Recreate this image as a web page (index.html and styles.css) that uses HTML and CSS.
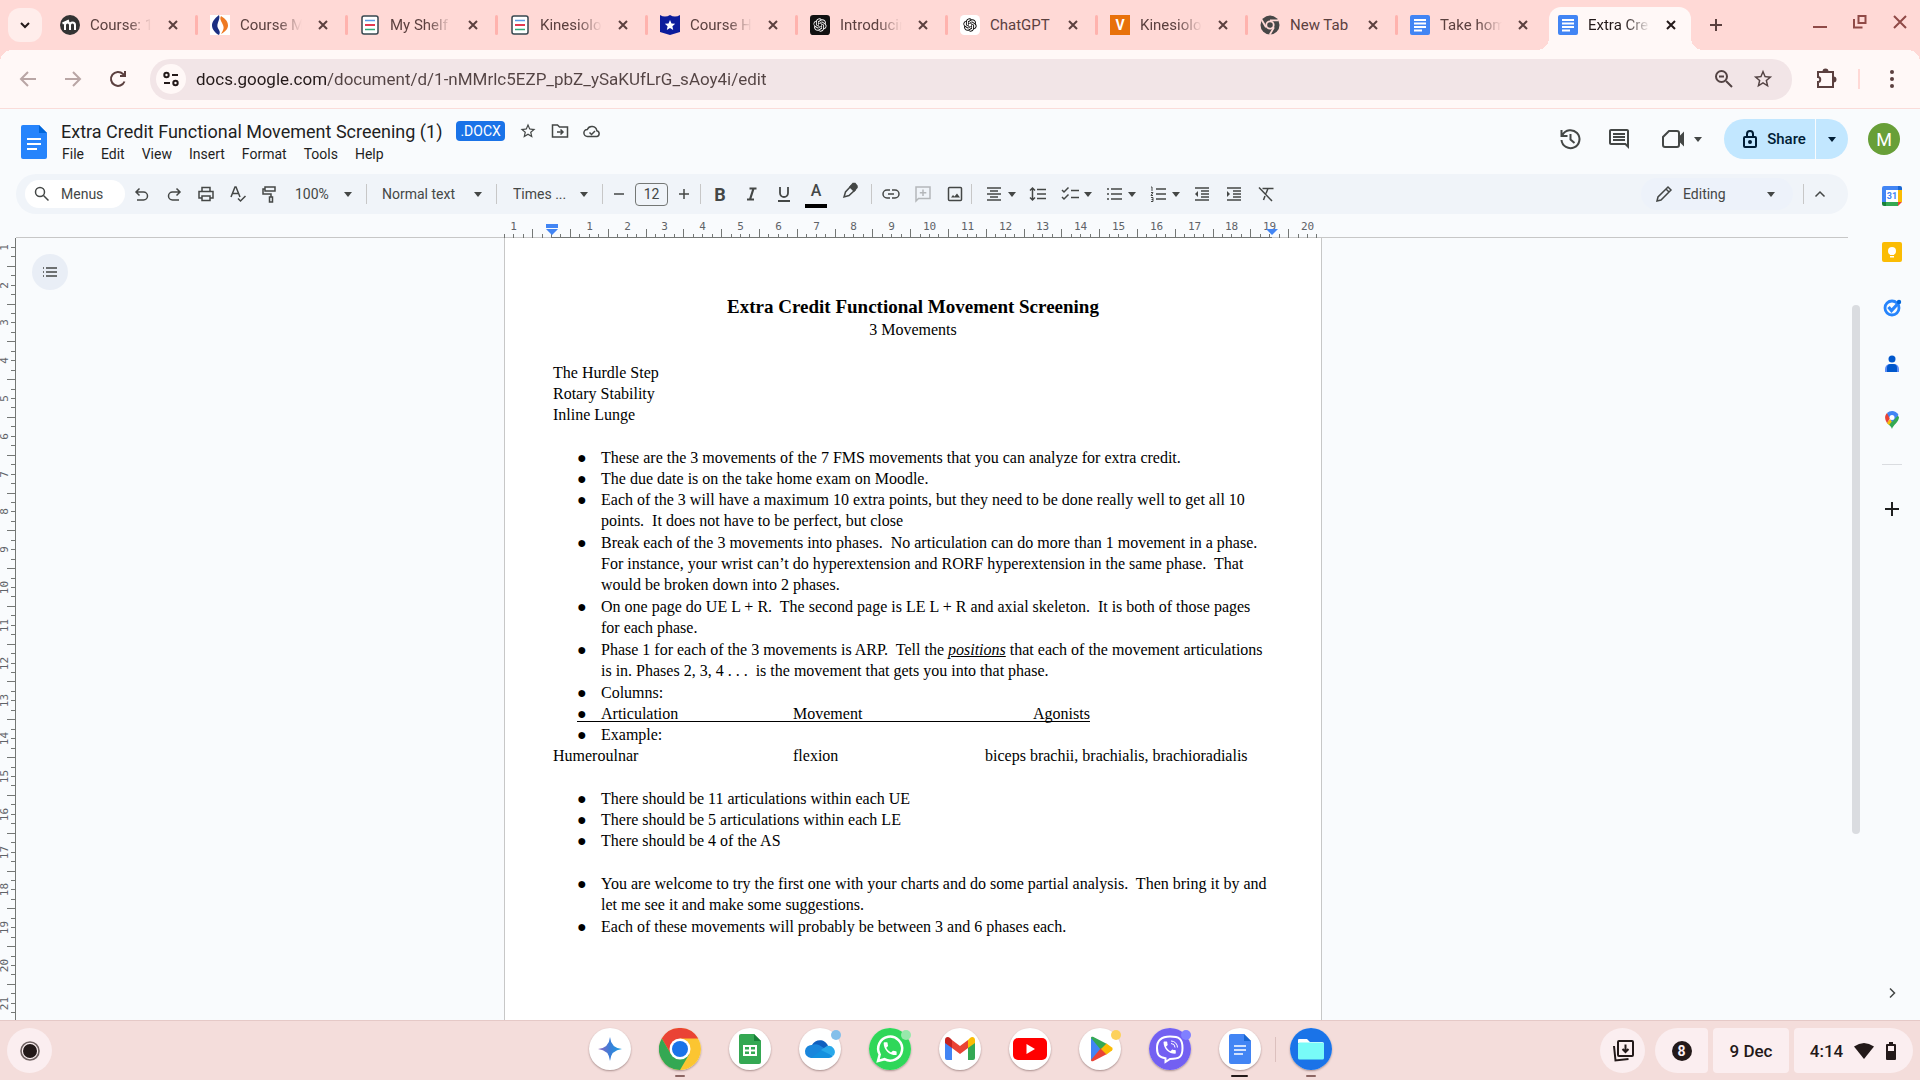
FILE: index.html
```
<!DOCTYPE html>
<html lang="en">
<head>
    <meta charset="UTF-8">
    <meta name="viewport" content="width=device-width, initial-scale=1.0">
    <title>Extra Credit Functional Movement Screening (1)</title>
    <link rel="stylesheet" href="styles.css">
</head>
<body>
    <!-- Tab strip -->
    <div class="tab-strip">
        <button class="tab-search" aria-label="Search tabs">
            <svg width="16" height="16" viewBox="0 0 16 16" class="line bold"><path d="M4 6l4 4 4-4"/></svg>
        </button>
        <div class="tab">
            <svg class="favicon" viewBox="0 0 20 20"><circle cx="10" cy="10" r="10" fill="#333"/><path d="M5 15V10a2.500 2.500 0 0 1 5 0v5M10 10a2.500 2.500 0 0 1 5 0v5M2.500 8.500L9 5.500" fill="none" stroke="#fff" stroke-width="2"/></svg>
            <span class="tab-title fade">Course: 1</span>
            <button class="tab-close" aria-label="Close tab"><svg width="12" height="12" viewBox="0 0 12 12" class="line bold"><path d="M2 2l8 8M10 2l-8 8"/></svg></button>
        </div>
        <div class="tab">
            <svg class="favicon" viewBox="0 0 20 20"><path fill="#fff" d="M0 0h20v20H0z"/><path fill="#1b2f82" d="M9 0C4 4 2 7 2 10.500S5 18 9 20c1-2 1-3 0-5-2-3-2-4.500-1-7.500S10 3 9 0z"/><path fill="#ee7a23" d="M11 1c5 3 7 6 7 9.500S15 17 11 19c3-5 3-6 2-9S9 4 11 1z"/></svg>
            <span class="tab-title fade">Course Ma</span>
            <button class="tab-close" aria-label="Close tab"><svg width="12" height="12" viewBox="0 0 12 12" class="line bold"><path d="M2 2l8 8M10 2l-8 8"/></svg></button>
        </div>
        <div class="tab">
            <svg class="favicon" viewBox="0 0 20 20"><rect x="2" y="1" width="16" height="18" rx="2" fill="#fff" stroke="#37474f" stroke-width="1.500"/><path d="M5 5.500h10" stroke="#5b9be6" stroke-width="1.500"/><path d="M5 10h10" stroke="#e53950" stroke-width="2"/><path d="M5 14.500h10" stroke="#34a877" stroke-width="1.500"/></svg>
            <span class="tab-title fade">My Shelf</span>
            <button class="tab-close" aria-label="Close tab"><svg width="12" height="12" viewBox="0 0 12 12" class="line bold"><path d="M2 2l8 8M10 2l-8 8"/></svg></button>
        </div>
        <div class="tab">
            <svg class="favicon" viewBox="0 0 20 20"><rect x="2" y="1" width="16" height="18" rx="2" fill="#fff" stroke="#37474f" stroke-width="1.500"/><path d="M5 5.500h10" stroke="#5b9be6" stroke-width="1.500"/><path d="M5 10h10" stroke="#e53950" stroke-width="2"/><path d="M5 14.500h10" stroke="#34a877" stroke-width="1.500"/></svg>
            <span class="tab-title fade">Kinesiolo</span>
            <button class="tab-close" aria-label="Close tab"><svg width="12" height="12" viewBox="0 0 12 12" class="line bold"><path d="M2 2l8 8M10 2l-8 8"/></svg></button>
        </div>
        <div class="tab">
            <svg class="favicon" viewBox="0 0 20 20"><path fill="#0c1c9c" d="M0 0q5 3 10 0 5 3 10 0v17l-10 3-10-3z"/><path fill="#fff" d="M10 5l1.500 3.400 3.700.4-2.800 2.500.8 3.700-3.200-1.900L6.800 15l.8-3.700-2.800-2.500 3.700-.4z"/></svg>
            <span class="tab-title fade">Course H</span>
            <button class="tab-close" aria-label="Close tab"><svg width="12" height="12" viewBox="0 0 12 12" class="line bold"><path d="M2 2l8 8M10 2l-8 8"/></svg></button>
        </div>
        <div class="tab">
            <svg class="favicon" viewBox="-6 -6 36 36"><rect x="-6" y="-6" width="36" height="36" rx="6" fill="#111"/><path id="knot" fill="#fff" d="M22.2819 9.8211a5.9847 5.9847 0 0 0-.5157-4.9108 6.0462 6.0462 0 0 0-6.5098-2.9A6.0651 6.0651 0 0 0 4.9807 4.1818a5.9847 5.9847 0 0 0-3.9977 2.9 6.0462 6.0462 0 0 0 .7427 7.0966 5.98 5.98 0 0 0 .511 4.9107 6.051 6.051 0 0 0 6.5146 2.9001A5.9847 5.9847 0 0 0 13.2599 24a6.0557 6.0557 0 0 0 5.7718-4.2058 5.9894 5.9894 0 0 0 3.9977-2.9001 6.0557 6.0557 0 0 0-.7475-7.0729zm-9.022 12.6081a4.4755 4.4755 0 0 1-2.8764-1.0408l.1419-.0804 4.7783-2.7582a.7948.7948 0 0 0 .3927-.6813v-6.7369l2.02 1.1686a.071.071 0 0 1 .038.052v5.5826a4.504 4.504 0 0 1-4.4945 4.4944zm-9.6607-4.1254a4.4708 4.4708 0 0 1-.5346-3.0137l.142.0852 4.783 2.7582a.7712.7712 0 0 0 .7806 0l5.8428-3.3685v2.3324a.0804.0804 0 0 1-.0332.0615L9.74 19.9502a4.4992 4.4992 0 0 1-6.1408-1.6464zM2.3408 7.8956a4.485 4.485 0 0 1 2.3655-1.9728V11.6a.7664.7664 0 0 0 .3879.6765l5.8144 3.3543-2.0201 1.1685a.0757.0757 0 0 1-.071 0l-4.8303-2.7865A4.504 4.504 0 0 1 2.3408 7.872zm16.5963 3.8558L13.1038 8.364 15.1192 7.2a.0757.0757 0 0 1 .071 0l4.8303 2.7913a4.4944 4.4944 0 0 1-.6765 8.1042v-5.6772a.79.79 0 0 0-.407-.667zm2.0107-3.0231l-.142-.0852-4.7735-2.7818a.7759.7759 0 0 0-.7854 0L9.409 9.2297V6.8974a.0662.0662 0 0 1 .0284-.0615l4.8303-2.7866a4.4992 4.4992 0 0 1 6.6802 4.66zM8.3065 12.863l-2.02-1.1638a.0804.0804 0 0 1-.038-.0567V6.0742a4.4992 4.4992 0 0 1 7.3757-3.4537l-.142.0805L8.704 5.459a.7948.7948 0 0 0-.3927.6813zm1.0976-2.3654l2.602-1.4998 2.6069 1.4998v2.9994l-2.5974 1.4997-2.6067-1.4997Z"/></svg>
            <span class="tab-title fade">Introducin</span>
            <button class="tab-close" aria-label="Close tab"><svg width="12" height="12" viewBox="0 0 12 12" class="line bold"><path d="M2 2l8 8M10 2l-8 8"/></svg></button>
        </div>
        <div class="tab">
            <svg class="favicon knot-dark" viewBox="-6 -6 36 36"><rect x="-6" y="-6" width="36" height="36" rx="8" fill="#fff"/><use href="#knot"/></svg>
            <span class="tab-title">ChatGPT</span>
            <button class="tab-close" aria-label="Close tab"><svg width="12" height="12" viewBox="0 0 12 12" class="line bold"><path d="M2 2l8 8M10 2l-8 8"/></svg></button>
        </div>
        <div class="tab">
            <svg class="favicon" viewBox="0 0 20 20"><path fill="#e8710a" d="M0 0h20v20H0z"/><text x="10" y="15" class="fav-letter" fill="#fff">V</text></svg>
            <span class="tab-title fade">Kinesiolo</span>
            <button class="tab-close" aria-label="Close tab"><svg width="12" height="12" viewBox="0 0 12 12" class="line bold"><path d="M2 2l8 8M10 2l-8 8"/></svg></button>
        </div>
        <div class="tab">
            <svg class="favicon" viewBox="0 0 20 20"><circle cx="10" cy="10" r="9.500" fill="#474747"/><circle cx="10" cy="10" r="3.700" fill="#474747" stroke="#ffd9d6" stroke-width="1.800"/><path d="M10 5.400h8.500M6 12.300L1.800 5M14 12.300l-4.300 7.500" stroke="#ffd9d6" stroke-width="1.800"/></svg>
            <span class="tab-title">New Tab</span>
            <button class="tab-close" aria-label="Close tab"><svg width="12" height="12" viewBox="0 0 12 12" class="line bold"><path d="M2 2l8 8M10 2l-8 8"/></svg></button>
        </div>
        <div class="tab last-idle">
            <svg class="favicon" viewBox="0 0 20 20"><rect width="20" height="20" rx="2" fill="#4285f4"/><path d="M4 5h12M4 8.500h12M4 12h12M4 15.500h8" stroke="#fff" stroke-width="1.800"/></svg>
            <span class="tab-title fade">Take hom</span>
            <button class="tab-close" aria-label="Close tab"><svg width="12" height="12" viewBox="0 0 12 12" class="line bold"><path d="M2 2l8 8M10 2l-8 8"/></svg></button>
        </div>
        <div class="tab active">
            <svg class="favicon" viewBox="0 0 20 20"><rect width="20" height="20" rx="2" fill="#4285f4"/><path d="M4 5h12M4 8.500h12M4 12h12M4 15.500h8" stroke="#fff" stroke-width="1.800"/></svg>
            <span class="tab-title fade">Extra Cre</span>
            <button class="tab-close" aria-label="Close tab"><svg width="12" height="12" viewBox="0 0 12 12" class="line bold"><path d="M2 2l8 8M10 2l-8 8"/></svg></button>
        </div>
        <button class="new-tab" aria-label="New tab"><svg width="16" height="16" viewBox="0 0 16 16" class="line bold"><path d="M8 2v12M2 8h12"/></svg></button>
        <div class="window-controls">
            <button aria-label="Minimise"><svg width="16" height="16" viewBox="0 0 16 16" class="line"><path d="M1 13h14" stroke-width="2"/></svg></button>
            <button aria-label="Restore"><svg width="16" height="16" viewBox="0 0 16 16" class="line bold"><path d="M6.500 2h7v7h-7zM2 5v8.500h8.500"/></svg></button>
            <button aria-label="Close window"><svg width="16" height="16" viewBox="0 0 16 16" class="line bold"><path d="M2 2l12 12M14 2L2 14"/></svg></button>
        </div>
    </div>

    <!-- Address bar -->
    <div class="address-bar">
        <button class="nav-btn off" aria-label="Back"><svg width="20" height="20" viewBox="0 0 20 20" class="line bold"><path d="M18 10H3M10 3l-7 7 7 7"/></svg></button>
        <button class="nav-btn off" aria-label="Forward"><svg width="20" height="20" viewBox="0 0 20 20" class="line bold"><path d="M2 10h15M10 3l7 7-7 7"/></svg></button>
        <button class="nav-btn" aria-label="Reload"><svg width="20" height="20" viewBox="0 0 20 20" class="line bold"><path d="M16.500 12.500A7 7 0 1 1 15 5l2 2M17 2v5h-5"/></svg></button>
        <div class="omnibox">
            <button class="site-info" aria-label="Site information"><svg width="18" height="18" viewBox="0 0 18 18" class="line bold"><circle cx="4.500" cy="5" r="2.200"/><path d="M10 5h6M2 13h6"/><circle cx="13.500" cy="13" r="2.200"/></svg></button>
            <input class="url" type="text" aria-label="Address" value="docs.google.com/document/d/1-nMMrlc5EZP_pbZ_ySaKUfLrG_sAoy4i/edit">
            <button aria-label="Zoom"><svg width="20" height="20" viewBox="0 0 20 20" class="line bold"><circle cx="7.500" cy="7.500" r="5.500"/><path d="M5 7.500h5M12 12l6 6"/></svg></button>
            <button aria-label="Bookmark"><svg width="22" height="22" viewBox="0 0 24 24"><path fill="currentColor" d="M22 9.240l-7.190-.62L12 2 9.190 8.630 2 9.240l5.460 4.730L5.820 21 12 17.270 18.180 21l-1.630-7.030L22 9.240zM12 15.400l-3.760 2.270 1-4.280-3.320-2.880 4.380-.38L12 6.100l1.710 4.040 4.380.38-3.320 2.880 1 4.280L12 15.400z"/></svg></button>
        </div>
        <button class="nav-btn ext" aria-label="Extensions"><svg width="24" height="24" viewBox="0 0 24 24" class="line bold"><path d="M4 5h15v15H4v-5c3 0 3-5 0-5z"/><path d="M9.500 4.500a2 2 0 0 1 4 0M19.500 10.500a2 2 0 0 1 0 4" fill="currentColor"/></svg></button>
        <span class="bar-split"></span>
        <button class="nav-btn more" aria-label="Menu"><svg width="20" height="20" viewBox="0 0 20 20"><g fill="currentColor"><circle cx="10" cy="3" r="2"/><circle cx="10" cy="10" r="2"/><circle cx="10" cy="17" r="2"/></g></svg></button>
    </div>

    <!-- Docs header -->
    <header class="docs-header">
        <a class="docs-logo" href="#" aria-label="Docs home"><svg width="26" height="34" viewBox="0 0 26 34"><path fill="#2684fc" d="M2 0h16l8 8v24a2 2 0 0 1-2 2H2a2 2 0 0 1-2-2V2a2 2 0 0 1 2-2z"/><path fill="#0066da" d="M18 0l8 8h-8z"/><path d="M6 14h14M6 19h14M6 24h10" stroke="#fff" stroke-width="2"/></svg></a>
        <div class="doc-meta">
            <div class="title-row">
                <span class="doc-title">Extra Credit Functional Movement Screening (1)</span>
                <span class="badge">.DOCX</span>
                <button aria-label="Star"><svg width="18" height="18" viewBox="0 0 24 24"><path fill="currentColor" d="M22 9.240l-7.190-.62L12 2 9.190 8.630 2 9.240l5.460 4.730L5.820 21 12 17.270 18.180 21l-1.630-7.030L22 9.240zM12 15.400l-3.760 2.270 1-4.280-3.320-2.880 4.380-.38L12 6.100l1.710 4.040 4.380.38-3.320 2.880 1 4.280L12 15.400z"/></svg></button>
                <button aria-label="Move"><svg width="18" height="18" viewBox="0 0 18 18" class="line"><path d="M1.500 3h5l2 2h8v10h-15zM6 10h6M9.500 7.500L12 10l-2.500 2.500"/></svg></button>
                <button aria-label="Saved to Drive"><svg width="18" height="18" viewBox="0 0 18 18" class="line"><path d="M4.500 14.500a3.500 3.500 0 0 1-.2-7 5 5 0 0 1 9.500 1.200A3 3 0 0 1 14 14.500zM6.500 10.500l2 2 3.500-3.500"/></svg></button>
            </div>
            <nav class="menu-row">
                <button>File</button>
                <button>Edit</button>
                <button>View</button>
                <button>Insert</button>
                <button>Format</button>
                <button>Tools</button>
                <button>Help</button>
            </nav>
        </div>
        <div class="header-actions">
            <button class="round-btn" aria-label="Version history"><svg width="24" height="24" viewBox="0 0 24 24" class="line bold"><path d="M4.500 8A9 9 0 1 1 3.500 13M3.500 3v6h6M12.500 7v5.500l4 3.500"/></svg></button>
            <button class="round-btn" aria-label="Comments"><svg width="24" height="24" viewBox="0 0 24 24"><path fill="currentColor" d="M22 4c0-1.100-.9-2-2-2H4c-1.100 0-2 .9-2 2v12c0 1.100.9 2 2 2h14l4 4zM4 16V4h16v13.200L18.800 16zM6 12h12v2H6zm0-3h12v2H6zm0-3h12v2H6z"/></svg></button>
            <button class="meet-btn" aria-label="Meet"><svg width="26" height="24" viewBox="0 0 26 24" class="line bold"><path d="M8 4h8a2 2 0 0 1 2 2v12a2 2 0 0 1-2 2H4a2 2 0 0 1-2-2v-8z"/><path d="M18 11l4-4v10l-4-4z" fill="currentColor"/></svg><i class="caret"></i></button>
            <div class="share">
                <button class="share-main"><svg width="16" height="20" viewBox="0 0 16 20" class="line bold"><rect x="2" y="8" width="12" height="10" rx="1"/><path d="M5 8V5a3 3 0 0 1 6 0v3"/><circle cx="8" cy="13" r="1" fill="currentColor"/></svg>Share</button>
                <button class="share-more" aria-label="Share options"><i class="caret"></i></button>
            </div>
            <button class="avatar">M</button>
        </div>
    </header>

    <div class="docs-body">
        <div class="main-col">
            <!-- Toolbar -->
            <div class="toolbar">
                <button class="menus-pill"><svg width="18" height="18" viewBox="0 0 18 18" class="line"><circle cx="7" cy="7" r="4.500"/><path d="M10.500 10.500l5 5"/></svg>Menus</button>
                <button class="tool" aria-label="Undo"><svg width="18" height="18" viewBox="0 0 18 18" class="line"><path d="M4 15h6.500a4 4 0 0 0 0-8H3.500M6.500 3.500L3 7l3.500 3.500"/></svg></button>
                <button class="tool" aria-label="Redo"><svg width="18" height="18" viewBox="0 0 18 18" class="line"><path d="M14 15H7.500a4 4 0 0 1 0-8h7M11.500 3.500L15 7l-3.500 3.500"/></svg></button>
                <button class="tool" aria-label="Print"><svg width="18" height="18" viewBox="0 0 18 18" class="line"><path d="M5 6V2.500h8V6M5 13H2V6.500h14V13h-3M5 11h8v4.500H5z"/></svg></button>
                <button class="tool" aria-label="Spelling"><svg width="18" height="18" viewBox="0 0 18 18" class="line"><path d="M2 12L6 2h1l4 10M3.500 8.500h6M9 13.500l2.500 2.500 5-5"/></svg></button>
                <button class="tool" aria-label="Paint format"><svg width="18" height="18" viewBox="0 0 18 18" class="line"><path d="M4 2h10v4H4zM4 4H2v5h8v3M8.500 12h3v5h-3z"/></svg></button>
                <label class="pick zoom"><select aria-label="Zoom"><option>100%</option></select></label>
                <span class="sep"></span>
                <label class="pick style"><select aria-label="Styles"><option>Normal text</option></select></label>
                <span class="sep"></span>
                <label class="pick font"><select aria-label="Font"><option>Times ...</option></select></label>
                <span class="sep"></span>
                <button class="tool" aria-label="Decrease font size"><svg width="12" height="12" viewBox="0 0 12 12" class="line"><path d="M1 6h10"/></svg></button>
                <input class="size-box" type="text" aria-label="Font size" value="12">
                <button class="tool" aria-label="Increase font size"><svg width="12" height="12" viewBox="0 0 12 12" class="line"><path d="M1 6h10M6 1v10"/></svg></button>
                <span class="sep gap"></span>
                <button class="tool glyph" aria-label="Bold"><b>B</b></button>
                <button class="tool" aria-label="Italic"><svg width="18" height="18" viewBox="0 0 18 18" class="line"><path d="M6.500 3.500h7M4 14.500h7M10.500 3.500l-3.500 11" stroke-width="2.200"/></svg></button>
                <button class="tool" aria-label="Underline"><svg width="18" height="18" viewBox="0 0 18 18" class="line"><path d="M5 2v6a4 4 0 0 0 8 0V2M3 16h12" stroke-width="1.800"/></svg></button>
                <button class="tool text-color" aria-label="Text colour">A</button>
                <button class="tool pen" aria-label="Highlight colour"><svg width="18" height="18" viewBox="0 0 18 18" class="line"><path d="M3 15l1.500-5L10 4l4 4-6 5.500z"/><path d="M9 5l3-3.500h2L16 4v1.500L13 9z" fill="currentColor"/></svg></button>
                <span class="sep gap"></span>
                <button class="tool" aria-label="Insert link"><svg width="18" height="18" viewBox="0 0 18 18" class="line"><path d="M8 5H5a4 4 0 0 0 0 8h3M10 5h3a4 4 0 0 1 0 8h-3M6 9h6"/></svg></button>
                <button class="tool off" aria-label="Add comment"><svg width="18" height="18" viewBox="0 0 18 18" class="line"><path d="M2 16V2h14v11.500H4.500zM9 4.500v6.500M5.800 7.700h6.500"/></svg></button>
                <button class="tool" aria-label="Insert image"><svg width="18" height="18" viewBox="0 0 18 18" class="line"><rect x="2.500" y="2.500" width="13" height="13" rx="1"/><path d="M5 12.500l2-2.500 1.500 1.500L11 8.500l3 4z" fill="currentColor" stroke="none"/></svg></button>
                <span class="sep gap wide"></span>
                <button class="tool drop" aria-label="Align"><svg width="18" height="18" viewBox="0 0 18 18" class="line"><path d="M2 3h14M5 6h8M2 9h14M5 12h8M2 15h14"/></svg><i class="caret"></i></button>
                <button class="tool" aria-label="Line spacing"><svg width="18" height="18" viewBox="0 0 18 18" class="line"><path d="M8 4.500h9M8 9h9M8 13.500h9M3.500 4v10M1 5.500L3.500 3 6 5.500M1 12.500L3.500 15 6 12.500"/></svg></button>
                <button class="tool drop" aria-label="Checklist"><svg width="18" height="18" viewBox="0 0 18 18" class="line"><path d="M10 5.500h8M10 12.500h8M1 5l2 2 4.500-4.500M1 12l2 2 4.500-4.500"/></svg><i class="caret"></i></button>
                <button class="tool drop" aria-label="Bulleted list"><svg width="18" height="18" viewBox="0 0 18 18" class="line"><path d="M6 4h11M6 9h11M6 14h11M2 4h2M2 9h2M2 14h2"/></svg><i class="caret"></i></button>
                <button class="tool drop" aria-label="Numbered list"><svg width="18" height="18" viewBox="0 0 18 18" class="line"><path d="M7 4h10M7 9h10M7 14h10"/><path d="M2 2h1v4M2 7.500h2L2 10.500h2M2 12.500h2v4H2M2.500 14.500H4" stroke-width="1"/></svg><i class="caret"></i></button>
                <button class="tool" aria-label="Decrease indent"><svg width="18" height="18" viewBox="0 0 18 18" class="line"><path d="M2 3h14M8 6h8M8 9h8M8 12h8M2 15h14"/><path d="M5 6v6L2 9z" fill="currentColor" stroke="none"/></svg></button>
                <button class="tool" aria-label="Increase indent"><svg width="18" height="18" viewBox="0 0 18 18" class="line"><path d="M2 3h14M8 6h8M8 9h8M8 12h8M2 15h14"/><path d="M2 6v6l3-3z" fill="currentColor" stroke="none"/></svg></button>
                <button class="tool" aria-label="Clear formatting"><svg width="18" height="18" viewBox="0 0 18 18" class="line"><path d="M5.500 3.500h11M11 3.500L9 8.500M8 11l-1.500 4M2 2.500l13 13.500"/></svg></button>
                <div class="toolbar-end">
                    <label class="mode">
                        <svg width="18" height="18" viewBox="0 0 18 18" class="line"><path d="M2 16l1-4L13 2l3 3L6 15zM11 4l3 3"/></svg>
                        <select aria-label="Mode"><option>Editing</option></select>
                    </label>
                    <span class="sep"></span>
                    <button class="tool" aria-label="Hide the menus"><svg width="12" height="12" viewBox="0 0 12 12" class="line"><path d="M1.500 8.500L6 4l4.500 4.500"/></svg></button>
                </div>
            </div>

            <div class="ruler-row"><svg id="ruler-top" width="830" height="24"></svg></div>

            <!-- Document -->
            <div class="workspace">
                <svg id="ruler-side" width="16" height="800"></svg>
                <div class="canvas">
                    <button class="outline-btn" aria-label="Show outline"><svg width="16" height="16" viewBox="0 0 16 16" class="line"><path d="M4 4h11M4 8h11M4 12h11M1 4h1M1 8h1M1 12h1"/></svg></button>
                    <article class="page">
                        <h1>Extra Credit Functional Movement Screening</h1>
                        <p class="center">3 Movements</p>
                        <p class="blank"></p>
                        <p>The Hurdle Step</p>
                        <p>Rotary Stability</p>
                        <p>Inline Lunge</p>
                        <p class="blank"></p>
                        <ul>
                            <li>These are the 3 movements of the 7 FMS movements that you can analyze for extra credit.</li>
                            <li>The due date is on the take home exam on Moodle.</li>
                            <li class="wrapped">Each of the 3 will have a maximum 10 extra points, but they need to be done really well to get all 10 points.  It does not have to be perfect, but close</li>
                            <li class="wrapped">Break each of the 3 movements into phases.  No articulation can do more than 1 movement in a phase.  For instance, your wrist can’t do hyperextension and RORF hyperextension in the same phase.  That would be broken down into 2 phases.</li>
                            <li class="wrapped">On one page do UE L + R.  The second page is LE L + R and axial skeleton.  It is both of those pages for each phase.</li>
                            <li class="wrapped">Phase 1 for each of the 3 movements is ARP.  Tell the <em>positions</em> that each of the movement articulations is in. Phases 2, 3, 4 . . .  is the movement that gets you into that phase.</li>
                            <li>Columns:</li>
                            <li class="columns">Articulation&#9;&#9;&#9;Movement&#9;&#9;&#9;&#9;Agonists</li>
                            <li>Example:</li>
                        </ul>
                        <p>Humeroulnar&#9;&#9;&#9;&#9;flexion&#9;&#9;&#9;&#9;biceps brachii, brachialis, brachioradialis</p>
                        <p class="blank"></p>
                        <ul>
                            <li>There should be 11 articulations within each UE</li>
                            <li>There should be 5 articulations within each LE</li>
                            <li>There should be 4 of the AS</li>
                        </ul>
                        <p class="blank"></p>
                        <ul>
                            <li class="wrapped">You are welcome to try the first one with your charts and do some partial analysis.  Then bring it by and let me see it and make some suggestions.</li>
                            <li>Each of these movements will probably be between 3 and 6 phases each.</li>
                        </ul>
                    </article>
                </div>
                <div class="scroll-track"><div class="scroll-thumb"></div></div>
            </div>
        </div>

        <!-- Side panel -->
        <aside class="side-panel">
            <button aria-label="Calendar"><svg width="20" height="20" viewBox="0 0 20 20"><path fill="#fff" d="M4 4h12v12H4z"/><path fill="#4285f4" d="M2 0h14v4H4v12H0V2a2 2 0 0 1 2-2z"/><path fill="#1967d2" d="M16 0h2a2 2 0 0 1 2 2v2h-4z"/><path fill="#fbbc04" d="M16 4h4v12h-4z"/><path fill="#34a853" d="M4 16h12v4H4z"/><path fill="#188038" d="M0 16h4v4H2a2 2 0 0 1-2-2z"/><path fill="#ea4335" d="M16 16h4l-4 4z"/><text x="10" y="13" class="cal-num">31</text></svg></button>
            <button aria-label="Keep"><svg width="20" height="20" viewBox="0 0 20 20"><rect width="20" height="20" rx="2" fill="#fbbc04"/><circle cx="10" cy="9" r="4" fill="#fff"/><path fill="#fff" d="M8 11h4v2H8zM8 14h4v1.500H8z"/></svg></button>
            <button aria-label="Tasks"><svg width="20" height="20" viewBox="0 0 20 20"><circle cx="10" cy="10" r="7" fill="none" stroke="#2684fc" stroke-width="2.800"/><path d="M6.500 9l3 3.500 7.500-8" fill="none" stroke="#2684fc" stroke-width="3.200"/><circle cx="17" cy="4" r="2.200" fill="#0066da"/></svg></button>
            <button aria-label="Contacts"><svg width="20" height="20" viewBox="0 0 20 20"><circle cx="10" cy="5" r="3.500" fill="#0057cc"/><path fill="#5c8df6" d="M3 18v-3a5 5 0 0 1 5-5h4a5 5 0 0 1 5 5v3z"/><path fill="#0057cc" d="M5 18v-4a4 4 0 0 1 4-4h2a4 4 0 0 1 4 4v4z"/></svg></button>
            <button aria-label="Maps"><svg width="20" height="20" viewBox="0 0 20 20"><path fill="#34a853" d="M10 19c1-4 7-7 7-12l-3-3-9 9c2 2 4 3 5 6z"/><path fill="#fbbc04" d="M5 13l5-6 2 2-5 6z"/><path fill="#ea4335" d="M5 13C3 10 2 6 5 3l4 4z"/><path fill="#4285f4" d="M5 3c3-3 9-3 11.500 2L10 12 7 7z"/><circle cx="10" cy="7.500" r="2.500" fill="#fff"/></svg></button>
            <span class="side-rule"></span>
            <button class="add-on" aria-label="Get add-ons"><svg width="16" height="16" viewBox="0 0 16 16" class="line bold"><path d="M8 1v14M1 8h14"/></svg></button>
            <button class="hide-panel" aria-label="Hide side panel"><svg width="12" height="12" viewBox="0 0 12 12" class="line"><path d="M4 1.500L8.500 6 4 10.500"/></svg></button>
        </aside>
    </div>

    <!-- Shelf -->
    <footer class="shelf">
        <button class="launcher" aria-label="Launcher"><svg width="20" height="20" viewBox="0 0 20 20"><circle cx="10" cy="10" r="9" fill="none" stroke="#6e6161" stroke-width="1.600"/><circle cx="10" cy="10" r="7" fill="#231919"/></svg></button>
        <div class="apps">
            <button class="app" aria-label="Gemini"><svg viewBox="0 0 42 42"><defs><linearGradient id="spark" x1="0" x2="1"><stop offset="0" stop-color="#9168c0"/><stop offset=".5" stop-color="#3b7dd8"/><stop offset="1" stop-color="#1ba1e3"/></linearGradient></defs><path fill="url(#spark)" d="M21 9q1 11 12 12-11 1-12 12-1-11-12-12 11-1 12-12z"/></svg></button>
            <button class="app open" aria-label="Chrome"><svg viewBox="0 0 42 42"><circle cx="21" cy="21" r="21" fill="#fbc531"/><path fill="#ea4335" d="M2.800 10.500A21 21 0 0 1 39.200 10.500H21l-9 15.700z"/><path fill="#34a853" d="M2.800 10.500A21 21 0 0 0 21 42l9.200-15.700H12z"/><circle cx="21" cy="21" r="10.500" fill="#fff"/><circle cx="21" cy="21" r="8" fill="#1a73e8"/></svg></button>
            <button class="app" aria-label="Sheets"><svg viewBox="0 0 42 42"><path fill="#34a853" d="M12 6h13l7 7v21a2 2 0 0 1-2 2H12a2 2 0 0 1-2-2V8a2 2 0 0 1 2-2z"/><path fill="#188038" d="M25 6l7 7h-7z"/><path fill="#fff" d="M14 17h14v11H14z"/><path fill="#34a853" d="M16 19h4v2.500h-4zM22 19h4v2.500h-4zM16 23.500h4V26h-4zM22 23.500h4V26h-4z"/></svg></button>
            <button class="app" aria-label="OneDrive"><svg viewBox="0 0 42 42"><path fill="#0f5fbf" d="M13 17c3-6 13-7 16 1l-8 6z"/><path fill="#1a86dc" d="M13 17a6.500 6.500 0 0 0-1 13h6l10-8-8-5c-2-1-5-1-7 0z"/><path fill="#1490df" d="M12 30h18a6 6 0 0 0 4-2l-10-7z"/><path fill="#28a8ea" d="M28 18a6 6 0 0 1 6 10l-12-6z"/></svg><i class="dot sky"></i></button>
            <button class="app" aria-label="WhatsApp"><svg viewBox="0 0 42 42"><circle cx="21" cy="21" r="21" fill="#2fd759"/><path d="M9 33l1.700-6.500a12 12 0 1 1 4.800 4.700z" fill="none" stroke="#fff" stroke-width="2.500"/><path fill="#fff" transform="translate(12.500 12) scale(.72)" d="M6.620 10.790c1.440 2.830 3.760 5.140 6.590 6.590l2.200-2.200c.27-.27.67-.36 1.020-.24 1.120.37 2.330.57 3.570.57.55 0 1 .45 1 1V20c0 .55-.45 1-1 1-9.390 0-17-7.610-17-17 0-.55.45-1 1-1h3.500c.55 0 1 .45 1 1 0 1.250.2 2.450.57 3.570.11.350.030.740-.25 1.020l-2.200 2.200z"/></svg><i class="dot mint"></i></button>
            <button class="app" aria-label="Gmail"><svg viewBox="0 0 42 42"><path fill="#4285f4" d="M6 14v16a2 2 0 0 0 2 2h5V19z"/><path fill="#34a853" d="M36 14v16a2 2 0 0 1-2 2h-5V19z"/><path fill="#ea4335" d="M13 12l8 6 8-6v8l-8 6-8-6z"/><path fill="#c5221f" d="M6 15v-3c0-3 3-4 5-2l2 2v8z"/><path fill="#fbbc04" d="M36 15v-3c0-3-3-4-5-2l-2 2v8z"/></svg></button>
            <button class="app" aria-label="YouTube"><svg viewBox="0 0 42 42"><rect x="4" y="10" width="34" height="22" rx="5" fill="#f00"/><path fill="#fff" d="M17.500 16v10l8.500-5z"/></svg></button>
            <button class="app" aria-label="Play Store"><svg viewBox="0 0 42 42"><path fill="#4285f4" d="M12 9v24l12-12z"/><path fill="#34a853" d="M12 10c0-1.500 1.500-1.500 2.500-1L28 16l-6 6z"/><path fill="#ea4335" d="M12 32c0 1.500 1.500 1.500 2.500 1L28 26l-6-6z"/><path fill="#fbbc04" d="M27.500 15.500l5.500 4q1.500 1.500 0 3l-5.500 4-5.500-5.500z"/></svg><i class="dot gold"></i></button>
            <button class="app" aria-label="Viber"><svg viewBox="0 0 42 42"><circle cx="21" cy="21" r="21" fill="#7360f2"/><path d="M21 8.500c9 0 12.500 2 12.500 11.500S30 31 21 31l-4.500 3v-3.700C10 29 8 27 8 20S12 8.500 21 8.500z" fill="none" stroke="#fff" stroke-width="2"/><path fill="#fff" transform="translate(12.500 11.500) scale(.68)" d="M6.620 10.790c1.440 2.830 3.760 5.140 6.590 6.590l2.200-2.200c.27-.27.67-.36 1.020-.24 1.120.37 2.330.57 3.570.57.55 0 1 .45 1 1V20c0 .55-.45 1-1 1-9.390 0-17-7.610-17-17 0-.55.45-1 1-1h3.500c.55 0 1 .45 1 1 0 1.250.2 2.450.57 3.570.11.350.030.740-.25 1.020l-2.200 2.200z"/><path d="M22 13a6.500 6.500 0 0 1 6.500 6.500M22 15.500a4 4 0 0 1 4 4" fill="none" stroke="#fff"/></svg><i class="dot violet"></i></button>
            <button class="app open current" aria-label="Docs"><svg viewBox="0 0 42 42"><path fill="#4285f4" d="M12 6h13l7 7v21a2 2 0 0 1-2 2H12a2 2 0 0 1-2-2V8a2 2 0 0 1 2-2z"/><path fill="#1967d2" d="M25 6l7 7h-7z"/><path d="M15 18h12M15 22h12M15 26h9" stroke="#fff" stroke-width="1.500"/></svg></button>
            <span class="shelf-rule"></span>
            <button class="app open" aria-label="Files"><svg viewBox="0 0 42 42"><circle cx="21" cy="21" r="21" fill="#1a73e8"/><path fill="#fff" d="M8 15v-3q0-1 1-1h8l3 3h12q2 0 2 2z"/><rect x="8" y="14.500" width="26" height="17" rx="1.500" fill="#78fbf8"/></svg></button>
        </div>
        <div class="status">
            <button class="tray round" aria-label="Holding space"><svg width="24" height="24" viewBox="0 0 24 24" class="line bold"><rect x="7" y="2" width="15" height="15" rx="1"/><path d="M14.500 5.500v7M11.500 10l3 3 3-3M3 7l1.500 14.500 13-1.500"/></svg></button>
            <button class="tray notif"><span>8</span></button>
            <button class="tray date">9 Dec</button>
            <button class="tray clock">4:14
                <svg width="20" height="18" viewBox="0 0 20 18"><path fill="currentColor" d="M10 17L0 4.500Q10-2.500 20 4.500z"/></svg>
                <svg width="12" height="18" viewBox="0 0 12 18"><path fill="currentColor" d="M4 0h4v2h2q1 0 1 1v14q0 1-1 1H2q-1 0-1-1V3q0-1 1-1h2zM3 4v5h6V4z"/></svg>
            </button>
        </div>
    </footer>

    <script src="script.js"></script>
</body>
</html>
```

FILE: styles.css
```
* {
    box-sizing: border-box;
}
body {
    margin: 0;
    height: 100vh;
    display: flex;
    flex-direction: column;
    overflow: hidden;
    font-family: Roboto, "Liberation Sans", sans-serif;
    font-size: 14px;
    color: #1f1f1f;
    background-color: #f9fbfd;
}
button {
    display: flex;
    align-items: center;
    justify-content: center;
    padding: 0;
    border: none;
    background: none;
    color: inherit;
    font: inherit;
    cursor: pointer;
}
svg {
    display: block;
    flex-shrink: 0;
}
.line {
    fill: none;
    stroke: currentColor;
    stroke-width: 1.5;
}
.line.bold {
    stroke-width: 2;
}
.caret {
    border: 4px solid transparent;
    border-top: 5px solid currentColor;
    border-bottom: none;
}

/* Tab strip */
.tab-strip {
    display: flex;
    align-items: center;
    height: 50px;
    padding-left: 8px;
    background-color: #ffd9d6;
    color: #5b403f;
}
.tab-search {
    width: 34px;
    height: 34px;
    margin-right: 4px;
    border-radius: 12px;
    background-color: #ffedeb;
    color: #231919;
}
.tab {
    position: relative;
    display: flex;
    align-items: center;
    gap: 10px;
    width: 150px;
    height: 34px;
    padding-left: 14px;
    font-size: 15px;
}
.tab:not(.last-idle):not(.active)::after {
    content: "";
    position: absolute;
    right: -2px;
    width: 3px;
    height: 20px;
    border-radius: 2px;
    background-color: #ffb3ae;
}
.favicon {
    width: 20px;
    height: 20px;
}
.fav-letter {
    font-size: 14px;
    font-weight: bold;
    text-anchor: middle;
}
.knot-dark use {
    filter: invert(1);
}
.tab-title {
    width: 62px;
    overflow: hidden;
    white-space: nowrap;
}
.tab-title.fade {
    mask-image: linear-gradient(90deg, #000 60%, transparent);
}
.tab-close {
    width: 22px;
    height: 22px;
}
.tab.active {
    align-self: flex-end;
    height: 43px;
    padding: 0 0 7px 12px;
    color: #231919;
}
.tab.active > * {
    z-index: 1;
}
.tab.active::before {
    content: "";
    position: absolute;
    inset: 0 5px 0 3px;
    border-radius: 12px 12px 0 0;
    background-color: #fff8f7;
}
.tab.active::after {
    content: "";
    position: absolute;
    left: -9px;
    right: -7px;
    bottom: 0;
    height: 12px;
    background:
        radial-gradient(circle at 0 0, transparent 12px, #fff8f7 12px) left / 12px 12px no-repeat,
        radial-gradient(circle at 100% 0, transparent 12px, #fff8f7 12px) right / 12px 12px no-repeat;
}
.new-tab {
    width: 32px;
    height: 32px;
    margin-left: 4px;
}
.window-controls {
    display: flex;
    gap: 24px;
    margin-left: auto;
    padding: 0 12px 6px 0;
    color: #904a47;
}

/* Address bar */
.address-bar {
    display: flex;
    align-items: center;
    height: 59px;
    padding: 0 10px;
    border-bottom: 1px solid #fadcd9;
    background: radial-gradient(circle at 12px 12px, #fff8f7 12px, #ffd9d6 12px) left top / 12px 12px no-repeat,
        radial-gradient(circle at 0 12px, #fff8f7 12px, #ffd9d6 12px) right top / 12px 12px no-repeat,
        #fff8f7;
    color: #5b403f;
}
.nav-btn {
    width: 36px;
    height: 36px;
    margin-right: 9px;
}
.nav-btn.off {
    color: #b9a6a5;
}
.omnibox {
    flex: 1;
    display: flex;
    align-items: center;
    gap: 18px;
    height: 41px;
    margin-left: 5px;
    padding: 0 18px 0 6px;
    border-radius: 20px;
    background-color: #f2e5e7;
    color: #534343;
}
.site-info {
    width: 30px;
    height: 30px;
    border-radius: 50%;
    background-color: #fff8f7;
    color: #231919;
}
.url {
    flex: 1;
    margin-left: -8px;
    padding: 0;
    border: none;
    font-family: Roboto, sans-serif;
    font-size: 17px;
    line-height: 24px;
    color: transparent;
    background: linear-gradient(90deg, #231919 130px, #534343 130px);
    background-clip: text;
}
.ext {
    margin: 0 14px 0 16px;
}
.bar-split {
    width: 2px;
    height: 20px;
    background-color: #ffd9d6;
}
.more {
    margin: 0 0 0 14px;
}

/* Docs header */
.docs-header {
    display: flex;
    align-items: flex-start;
    height: 65px;
    padding: 10px 20px 0 21px;
    color: #444746;
}
.docs-logo {
    margin: 6px 14px 0 0;
}
.title-row {
    display: flex;
    align-items: center;
    gap: 14px;
    height: 24px;
}
.doc-title {
    font-size: 18px;
    color: #1f1f1f;
}
.badge {
    padding: 0 4px;
    border-radius: 4px;
    background-color: #1a73e8;
    color: #fff;
    font-size: 14px;
    line-height: 20px;
}
.menu-row {
    display: flex;
    gap: 17px;
    padding-left: 1px;
    line-height: 22px;
    color: #1f1f1f;
}
.header-actions {
    display: flex;
    align-items: center;
    height: 40px;
    margin-left: auto;
}
.round-btn {
    width: 49px;
    height: 40px;
}
.meet-btn {
    gap: 7px;
    margin: 0 22px 0 18px;
}
.share {
    display: flex;
    gap: 1px;
    margin-right: 20px;
    color: #001d35;
}
.share button {
    height: 40px;
    background-color: #c2e7ff;
}
.share .share-main {
    gap: 9px;
    width: 91px;
    padding-left: 9px;
    border-radius: 20px 0 0 20px;
    font-size: 15px;
    font-weight: 500;
}
.share .share-more {
    width: 32px;
    border-radius: 0 20px 20px 0;
}
.avatar {
    width: 32px;
    height: 32px;
    border-radius: 50%;
    background-color: #689f38;
    color: #fff;
    font-size: 18px;
}

.docs-body {
    flex: 1;
    display: flex;
    min-height: 0;
}
.main-col {
    flex: 1;
    display: flex;
    flex-direction: column;
    min-width: 0;
}

/* Toolbar */
.toolbar {
    display: flex;
    align-items: center;
    height: 40px;
    margin: 0 12px 0 16px;
    padding-left: 9px;
    border-radius: 20px;
    background-color: #f0f4f9;
    color: #444746;
}
.menus-pill {
    justify-content: flex-start;
    gap: 10px;
    width: 100px;
    height: 28px;
    margin-right: 1px;
    padding-left: 8px;
    border-radius: 14px;
    background-color: #fff;
}
.tool {
    width: 32px;
    height: 32px;
}
.tool.off {
    color: #b4b7ba;
}
.drop {
    gap: 5px;
    width: 44px;
}
.glyph {
    font-size: 18px;
}
.text-color {
    font-size: 16px;
    line-height: 18px;
    font-weight: 500;
    background: linear-gradient(#000, #000) center 26px / 22px 4px no-repeat;
    padding-bottom: 6px;
}
.pen {
    padding: 0 0 6px 4px;
}
.sep {
    width: 1px;
    height: 20px;
    background-color: #c7c7c7;
}
.sep.gap {
    margin-right: 3px;
}
.sep.wide {
    margin-right: 6px;
}
.pen + .sep {
    margin-left: 7px;
}
.pick, .mode {
    position: relative;
    display: flex;
    align-items: center;
}
.pick::after, .mode::after {
    content: "";
    position: absolute;
    right: 14px;
    border: 4px solid transparent;
    border-top: 5px solid currentColor;
    border-bottom: none;
    pointer-events: none;
}
select {
    width: 100%;
    appearance: none;
    padding: 0;
    border: none;
    background: none;
    color: inherit;
    font: inherit;
}
.zoom {
    width: 80px;
    padding-left: 9px;
}
.style {
    width: 129px;
    padding-left: 15px;
}
.font {
    width: 105px;
    padding-left: 16px;
}
.size-box {
    width: 33px;
    height: 23px;
    padding: 0;
    border: 1px solid #747775;
    border-radius: 4px;
    background: none;
    color: inherit;
    font: inherit;
    text-align: center;
}
.toolbar-end {
    display: flex;
    align-items: center;
    margin-left: auto;
    padding-right: 12px;
}
.mode {
    gap: 10px;
    width: 152px;
    height: 32px;
    margin-right: 10px;
    padding-left: 14px;
    border-radius: 16px;
    background-color: #edf2fa;
}
.mode::after {
    right: 18px;
}

/* Rulers */
.ruler-row {
    display: flex;
    justify-content: center;
    height: 24px;
    margin: 0 12px 0 16px;
    padding-right: 38px;
    border-bottom: 1px solid #c7c7c7;
}
.tick {
    stroke: #747775;
}
.ruler-num {
    font-family: "DejaVu Sans Mono", monospace;
    font-size: 11px;
    fill: #5f6368;
    text-anchor: middle;
}
.marker {
    fill: #4285f4;
}

/* Document */
.workspace {
    flex: 1;
    display: flex;
    min-height: 0;
    overflow: hidden;
}
.canvas {
    position: relative;
    flex: 1;
    padding-right: 30px;
}
.outline-btn {
    position: absolute;
    left: 16px;
    top: 16px;
    width: 36px;
    height: 36px;
    border-radius: 50%;
    background-color: #e9eef6;
    color: #444746;
}
.page {
    display: flow-root;
    width: 818px;
    min-height: 100%;
    margin: 0 auto;
    padding: 56px 48px 0;
    border: 1px solid #c7c7c7;
    border-width: 0 1px;
    background-color: #fff;
    color: #000;
    font-family: "Liberation Serif", "Times New Roman", serif;
    font-size: 16px;
    line-height: 21px;
    tab-size: 48px;
}
.page h1 {
    margin: 0;
    font-size: 19px;
    line-height: 25px;
    text-align: center;
}
.page p {
    margin: 0;
    white-space: pre-wrap;
}
.page .center {
    text-align: center;
}
.page .blank {
    height: 22px;
}
.page ul {
    margin: 0;
    padding: 0 3px 0 48px;
    list-style: none;
}
.page li {
    text-indent: -24px;
    white-space: pre-wrap;
}
.page li::before {
    content: "●\9";
}
.page .wrapped {
    padding-bottom: 1px;
}
.page .columns {
    width: fit-content;
    margin-left: -24px;
    padding-left: 24px;
    background: linear-gradient(#000, #000) 0 18px / 100% 1px no-repeat;
}
.page em {
    text-decoration: underline;
}
.scroll-track {
    width: 20px;
    padding: 67px 0 0 12px;
}
.scroll-thumb {
    height: 74%;
    border-radius: 4px;
    background-color: #dadce0;
}

/* Side panel */
.side-panel {
    display: flex;
    flex-direction: column;
    align-items: center;
    gap: 36px;
    width: 60px;
    padding: 12px 0 21px 4px;
}
.side-rule {
    width: 20px;
    height: 1px;
    margin-top: -2px;
    background-color: #dadce0;
}
.hide-panel {
    margin-top: auto;
    color: #444746;
}

/* Shelf */
.shelf {
    display: grid;
    grid-template-columns: 1fr auto 1fr;
    align-items: center;
    height: 60px;
    padding: 0 7px;
    border-top: 1px solid #e5c9c7;
    background-color: #f4dddb;
    color: #231919;
}
.launcher {
    width: 45px;
    height: 45px;
    border-radius: 50%;
    background-color: #fbeef0;
}
.apps {
    display: flex;
    align-items: center;
    gap: 28px;
    margin-top: -3px;
}
.app {
    position: relative;
    width: 42px;
    height: 42px;
    border-radius: 50%;
    background-color: #fff;
    box-shadow: 0 1px 2px rgba(60, 30, 30, 0.4);
}
.app svg {
    width: 42px;
    height: 42px;
}
.app.open::after {
    content: "";
    position: absolute;
    bottom: -7px;
    width: 10px;
    height: 2px;
    border-radius: 1px;
    background-color: #8c6663;
}
.app.current::after {
    width: 17px;
    background-color: #231919;
}
.dot {
    position: absolute;
    top: 2px;
    right: 0;
    width: 10px;
    height: 10px;
    border-radius: 50%;
}
.sky { background-color: #84bfea; }
.mint { background-color: #97e8ab; }
.gold { background-color: #fdd15c; }
.violet { background-color: #8080ff; }
.shelf-rule {
    width: 1px;
    height: 25px;
    margin: 0 -14px;
    background-color: #dcc0be;
}
.status {
    display: flex;
    justify-content: flex-end;
    gap: 5px;
}
.tray {
    height: 45px;
    border-radius: 4px;
    background-color: #fbeef0;
    font-size: 17px;
    font-weight: 500;
}
.round {
    width: 45px;
    margin-right: 5px;
    border-radius: 50%;
}
.notif {
    width: 53px;
    border-radius: 23px 4px 4px 23px;
}
.notif span {
    width: 20px;
    border-radius: 50%;
    background-color: #231919;
    color: #fbeef0;
    font-size: 14px;
    line-height: 20px;
    font-weight: bold;
}
.date {
    width: 76px;
}
.clock {
    gap: 11px;
    width: 119px;
    border-radius: 4px 23px 23px 4px;
}
.cal-num {
    font-size: 9px;
    font-weight: bold;
    text-anchor: middle;
    fill: #4285f4;
}
```

FILE: script.js
```
const CM = 37.8;

function tick(x1, y1, x2, y2) {
    return `<line class="tick" x1="${x1}" y1="${y1}" x2="${x2}" y2="${y2}"/>`;
}

// horizontal ruler, zero sits on the left margin of the page
function drawTopRuler() {
    const zero = 54;
    let out = '';
    for (let q = -5; q <= 81; q++) {
        const x = Math.round(zero + q * CM / 4) - 0.5;
        const half = Math.abs(q % 4) === 2;
        out += tick(x, half ? 15 : 20, x, 24);
        if (q % 4 === 0 && q !== 0) {
            out += `<text class="ruler-num" x="${x}" y="16">${Math.abs(q / 4)}</text>`;
        }
    }
    out += `<line class="tick" x1="${zero}" y1="23.5" x2="${zero + 720}" y2="23.5"/>`;
    out += `<path class="marker" d="M${zero - 6} 10h12v4h-12zM${zero - 6} 15h12l-6 6z"/>`;
    out += `<path class="marker" d="M${zero + 714} 15h12l-6 6z"/>`;
    document.getElementById('ruler-top').innerHTML = out;
}

// vertical ruler, scrolled so the first centimetre is at the top
function drawSideRuler() {
    const zero = -29;
    let out = tick(15.5, 0, 15.5, 800);
    for (let q = 3; q <= 86; q++) {
        const y = Math.round(zero + q * CM / 4) + 0.5;
        out += tick(q % 4 === 2 ? 7 : 11, y, 15, y);
        if (q % 4 === 0) {
            out += `<text class="ruler-num" transform="translate(8 ${y}) rotate(-90)">${q / 4}</text>`;
        }
    }
    document.getElementById('ruler-side').innerHTML = out;
}

drawTopRuler();
drawSideRuler();
```
